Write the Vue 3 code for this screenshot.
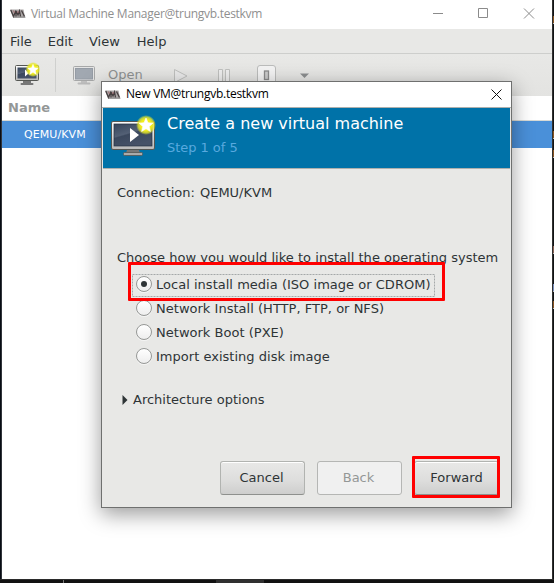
<script setup>
const menus = ['File', 'Edit', 'View', 'Help']
const options = [
  'Local install media (ISO image or CDROM)',
  'Network Install (HTTP, FTP, or NFS)',
  'Network Boot (PXE)',
  'Import existing disk image',
]
</script>

<template>
  <div class="desktop">
    <svg width="0" height="0" class="defs">
      <defs>
        <linearGradient id="screen" x1="0" y1="0" x2=".5" y2="1">
          <stop offset="0" stop-color="#35445a" />
          <stop offset=".48" stop-color="#536075" />
          <stop offset=".53" stop-color="#3b485d" />
          <stop offset="1" stop-color="#465268" />
        </linearGradient>
        <linearGradient id="frame" x1="0" y1="0" x2="0" y2="1">
          <stop offset="0" stop-color="#fdfdfd" />
          <stop offset="1" stop-color="#b9b9b9" />
        </linearGradient>
        <radialGradient id="glow">
          <stop offset=".55" stop-color="#f2ee1c" />
          <stop offset=".78" stop-color="#e5e62a" stop-opacity=".8" />
          <stop offset="1" stop-color="#e5e62a" stop-opacity="0" />
        </radialGradient>
        <symbol id="vmm" viewBox="0 0 16 9">
          <path d="M0 .5H13.500L15 8.500H3Z" fill="#aaa6a6" />
          <path d="M.8 1 3.500 7.500 6 1.500M6 7.500V2L8 6 9.500 2 10.500 7.500M11.500 1.500 14.500 7.500" fill="none" stroke="#453e3f" stroke-width="1.300" />
          <path d="M3.300 1.500 4.500 4M8 2V4" stroke="#a56065" stroke-width=".8" />
          <path d="M3 8.200H15.500" stroke="#777" stroke-width=".8" />
        </symbol>
        <symbol id="monitor" viewBox="0 0 46 42">
          <rect x="1.500" y="7.500" width="43" height="28" rx="1.500" fill="url(#frame)" stroke="#555753" />
          <rect x="4" y="10" width="38" height="22" fill="url(#screen)" stroke="#263143" stroke-width=".7" />
          <path d="M17 36H29L30 39H16Z" fill="#777" />
          <rect x="13.500" y="38.500" width="19" height="3" rx="1" fill="#aaa" stroke="#555753" stroke-width=".8" />
          <path d="M20 14 29 21 20 28Z" fill="#fff" />
        </symbol>
        <symbol id="star" viewBox="0 0 20 20">
          <circle cx="10" cy="10" r="10" fill="url(#glow)" />
          <path d="m10 3 2 4.700 5 .5-3.800 3.300 1.200 5-4.400-2.700-4.400 2.700 1.200-5L3 8.200l5-.5Z" fill="#fff" stroke="#fff" stroke-width=".6" />
        </symbol>
      </defs>
    </svg>

    <main class="window">
      <header class="titlebar">
        <svg class="logo" width="16" height="9"><use href="#vmm" /></svg>
        <span class="main-title">Virtual Machine Manager@trungvb.testkvm</span>
        <svg class="controls" width="103" height="12" fill="none" stroke="#8b8b8b">
          <path d="M0 5.500H10M45.500.500H54.500V9.500H45.500ZM91 .5 101 10.500M101 .5 91 10.500" />
        </svg>
      </header>
      <nav class="menubar">
        <span v-for="m in menus" :key="m">{{ m }}</span>
      </nav>
      <section class="toolbar">
        <div class="new-vm">
          <svg width="26" height="24" viewBox="0 0 26 24">
            <rect x="1.500" y="3.500" width="23" height="15" rx="1" fill="url(#frame)" stroke="#555753" />
            <rect x="3.500" y="5.500" width="19" height="11" fill="url(#screen)" />
            <path d="M11 7.500 15 11 11 14.500Z" fill="#fff" />
            <path d="M9 19H17V21H9Z" fill="#777" />
            <rect x="6.500" y="21" width="13" height="2" rx="1" fill="#777" />
            <svg x="11.500" y="0" width="15" height="15"><use href="#star" /></svg>
          </svg>
        </div>
        <i class="separator"></i>
        <svg class="open-icon" width="22" height="20" viewBox="0 0 22 20">
          <rect x=".5" y=".5" width="21" height="14" rx="1" fill="#e4e4e4" stroke="#a7a8a8" />
          <rect x="2.500" y="2.500" width="17" height="10.500" fill="#a1a8b1" stroke="#959ca5" />
          <path d="M8 15H14V17H8Z" fill="#c0c0c0" />
          <rect x="4.500" y="16.500" width="13" height="2" rx="1" fill="#bababa" />
        </svg>
        <span class="open">Open</span>
        <svg class="actions" width="140" height="23" fill="none" stroke="#bfc0be">
          <path d="M1.500 5.500V18.500L14 12Z" fill="#eaeaea" />
          <path d="M45.500 5.500H49.500V17.500H45.500ZM52.500 5.500H56.500V17.500H52.500Z" fill="#eee" />
          <rect x="84.500" y="1.500" width="18" height="19" rx="2.500" fill="#f3f3f3" stroke="#bbbcbb" />
          <rect x="91.500" y="7" width="4" height="8.500" fill="#ccc" stroke="#8b8b8b" stroke-width="1.300" />
          <path d="M127 9.500H136L131.500 14Z" fill="#8b8e8f" stroke="none" />
        </svg>
      </section>
      <div class="column-head">Name</div>
      <div class="connection-row">QEMU/KVM</div>
    </main>

    <i v-for="n in 6" :key="n" :class="['fleck', `fleck-${n}`]"></i>
    <footer class="taskbar"><i></i><b></b></footer>

    <section class="dialog">
      <header class="dialog-title">
        <svg class="logo" width="16" height="9"><use href="#vmm" /></svg>
        <span class="sub-title">New VM@trungvb.testkvm</span>
        <svg class="close" width="11" height="11" stroke="#111"><path d="M.5.500 10.500 10.500M10.500.500.500 10.500" /></svg>
      </header>
      <div class="banner">
        <svg class="banner-icon" width="46" height="42" viewBox="0 0 46 42">
          <use href="#monitor" />
          <svg x="26" y="1" width="20" height="20"><use href="#star" /></svg>
        </svg>
        <div class="banner-text">
          <div class="heading">Create a new virtual machine</div>
          <div class="step">Step 1 of 5</div>
        </div>
      </div>
      <div class="body">
        <div class="connection"><span>Connection:</span><span>QEMU/KVM</span></div>
        <div class="prompt">Choose how you would like to install the operating system</div>
        <div class="options">
          <div v-for="(o, n) in options" :key="o" class="option">
            <i class="radio" :class="{ checked: n === 0 }"></i><span>{{ o }}</span>
            <svg v-if="n === 0" class="focus" width="304" height="24"><rect x=".5" y=".5" width="302" height="22" fill="none" stroke="#a5a8a9" stroke-dasharray="2 1" /></svg>
          </div>
        </div>
        <div class="architecture">
          <svg width="6" height="10"><path d="M.5 0 5.500 5 .5 10Z" fill="#2e3436" /></svg>
          <span>Architecture options</span>
        </div>
        <div class="buttons">
          <button>Cancel</button><button disabled>Back</button><button>Forward</button>
        </div>
      </div>
      <i class="mark mark-option"></i>
      <i class="mark mark-forward"></i>
    </section>
  </div>
</template>

<style>
body { margin: 0; overflow: hidden; }
</style>
<style scoped>
* { box-sizing: border-box; }
.desktop { position: relative; width: 554px; height: 583px; padding: 0 2px; overflow: hidden; background: linear-gradient(90deg, #080c14 0 1px, #30343a 1px 2px, #111 2px 552px, #303030 552px 553px, #111315 553px); font: 13px/16px "DejaVu Sans", sans-serif; color: #2e3436; white-space: nowrap; }
.defs { position: absolute; }
.window { height: 579px; background: #fff; }
.titlebar { height: 29px; display: flex; align-items: flex-start; padding: 9px 0 0 8px; color: #8f8f8f; }
.logo { flex: none; }
.main-title, .sub-title { font: 12px/16px "Open Sans", sans-serif; }
.main-title { margin: -3px 0 0 5px; width: 231px; letter-spacing: -.28px; }
.controls { margin: -1px 0 0 171px; flex: none; }
.menubar { height: 25px; padding: 5px 8px 3px; display: flex; gap: 16px; background: #e8e8e6; border-bottom: 1px solid #cdcecc; }
.menubar span:last-child { margin-left: 1px; }
.toolbar { height: 42px; display: flex; align-items: flex-start; background: linear-gradient(#e8e8e6, #e3e3e1); }
.new-vm { width: 53px; padding: 8px 0 0 12px; }
.separator { width: 1px; height: 34px; margin-top: 4px; background: #cfd0ce; }
.open-icon { margin: 12px 0 0 17px; }
.open { margin: 13px 0 0 13px; width: 34px; color: #8f9292; }
.actions { margin: 10px 0 0 31px; }
.column-head { height: 25px; padding: 4px 6px; font-weight: bold; color: #949797; border-bottom: 1px solid #d8dad6; }
.connection-row { height: 27px; padding: 6px 22px; color: #fff; background: #4a90d9; font-size: 11px; line-height: 15px; letter-spacing: .08px; }

.dialog { position: absolute; left: 101px; top: 81px; width: 411px; height: 427px; border: 1px solid #6f706f; background: #e8e8e6; box-shadow: 0 6px 20px rgba(0,0,0,.4); }
.dialog-title { height: 26px; display: flex; padding: 8px 0 0 3px; background: #fff; border-bottom: 1px solid #aeb0ad; color: #000; }
.sub-title { margin: -4px 0 0 5px; width: 143px; letter-spacing: -.26px; }
.close { margin: -1px 0 0 222px; }
.banner { height: 61px; display: flex; padding: 6px 0 0 7px; margin: 0 1px; background: #0072a8; border-bottom: 1px solid #aeb0ad; color: #fff; }
.banner-text { padding-left: 11px; }
.heading { font-size: 16px; line-height: 20px; }
.step { margin-top: 6px; color: #58a9df; letter-spacing: -.04px; }
.body { padding: 16px 12px 0 15px; }
.connection { display: flex; gap: 5px; }
.prompt { margin-top: 49px; letter-spacing: .025px; }
.options { margin: 7px 0 0 19px; }
.option { position: relative; height: 24px; display: flex; align-items: center; gap: 4px; letter-spacing: .02px; }
.radio { display: grid; place-items: center; width: 16px; height: 16px; margin-top: -2px; border: 1px solid #969896; border-radius: 50%; background: linear-gradient(#fff, #eee); box-shadow: 0 1px #f5f5f5; }
.checked::after { content: ""; width: 6px; height: 6px; border-radius: 50%; background: #2e3436; }
.focus { position: absolute; left: -4px; top: 1px; }
.architecture { display: flex; align-items: center; gap: 5px; margin: 23px 0 0 5px; }
.buttons { display: flex; justify-content: flex-end; gap: 12px; margin-top: 53px; }
button { width: 85px; height: 34px; padding: 0; border: 1px solid #b1b3b0; border-bottom-color: #8e908d; border-radius: 3px; background: linear-gradient(#e8e8e7, #dededd 55%, #cececd); box-shadow: inset 0 1px #fff; color: #2e3436; font: 13px/16px "DejaVu Sans", sans-serif; }
button:not(:last-child) { padding-right: 2px; }
button:disabled { color: #949796; background: #f0f0f0; border-color: #b5b6b4; box-shadow: none; }
.mark { position: absolute; border: 3px solid #f00; border-radius: 1px; }
.mark-option { left: 26px; top: 180px; width: 317px; height: 39px; }
.mark-forward { left: 310px; top: 374px; width: 88px; height: 42px; }
.taskbar { display: flex; height: 4px; margin: 0 -2px; background: #111; border-top: 1px solid #2b2b2b; }
.taskbar i { width: 1px; height: 4px; margin-left: 63px; background: #777; }
.taskbar b { width: 48px; height: 4px; margin-left: 152px; background: #303030; }
.fleck { position: absolute; left: 553px; width: 1px; height: 8px; border-bottom: 1px solid #bbb; background: #875320; }
.fleck-1 { top: 16px; }
.fleck-2 { top: 131px; }
.fleck-3 { top: 150px; }
.fleck-4 { top: 246px; background: #8a6255; }
.fleck-5 { top: 284px; background: #758bbb; }
.fleck-6 { top: 301px; }
</style>
